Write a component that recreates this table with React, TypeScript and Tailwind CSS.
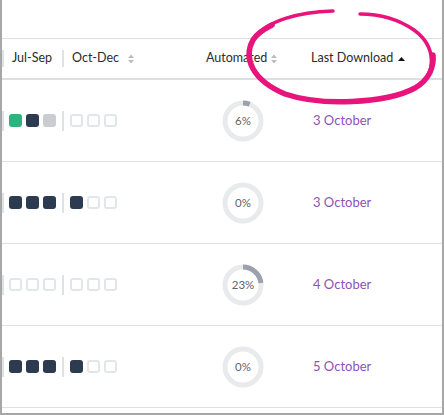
import React from 'react'

type Q = 'g' | 'n' | 'l' | 'e'

const rows: { a: Q[]; b: Q[]; pct: number; date: string }[] = [
  { a: ['g', 'n', 'l'], b: ['e', 'e', 'e'], pct: 6, date: '3 October' },
  { a: ['n', 'n', 'n'], b: ['n', 'e', 'e'], pct: 0, date: '3 October' },
  { a: ['e', 'e', 'e'], b: ['e', 'e', 'e'], pct: 23, date: '4 October' },
  { a: ['n', 'n', 'n'], b: ['n', 'e', 'e'], pct: 0, date: '5 October' },
]

function Sep({ h = 'h-[20px]' }: { h?: string }) {
  return <div className={`w-[2px] ${h} bg-[#dfe2e5]`} />
}

function Square({ q }: { q: Q }) {
  if (q === 'e') return <div className="h-[13px] w-[13px] rounded-[3px] border-2 border-[#e3e6e9]" />
  const bg = q === 'g' ? 'bg-[#2bb47d]' : q === 'n' ? 'bg-[#2c3b4f]' : 'bg-[#c9ccd0]'
  return <div className={`h-[13px] w-[13px] rounded-[3px] ${bg}`} />
}

function Squares({ list }: { list: Q[] }) {
  return (
    <div className="flex gap-[4px]">
      {list.map((q, i) => (
        <Square key={i} q={q} />
      ))}
    </div>
  )
}

function SortBoth() {
  return (
    <svg width="6" height="10" viewBox="0 0 6 10" className="fill-[#b9bdc3]">
      <polygon points="0,4 3,0.5 6,4" />
      <polygon points="0,6 3,9.5 6,6" />
    </svg>
  )
}

function Ring({ pct }: { pct: number }) {
  const r = 18
  const c = 2 * Math.PI * r
  return (
    <div className="relative h-[42px] w-[42px]">
      <svg width="42" height="42" viewBox="0 0 42 42" className="-rotate-90">
        <circle cx="21" cy="21" r={r} fill="none" stroke="#e9eaec" strokeWidth="5" />
        {pct > 0 && (
          <circle
            cx="21"
            cy="21"
            r={r}
            fill="none"
            stroke="#9ba2ab"
            strokeWidth="5"
            strokeDasharray={`${(c * pct) / 100} ${c}`}
          />
        )}
      </svg>
      <div className="absolute inset-0 flex items-center justify-center text-[11.5px] text-[#5f646b]">{pct}%</div>
    </div>
  )
}

export default function App() {
  return (
    <div
      className="relative h-[415px] w-[444px] overflow-hidden border-x-2 border-b-2 border-[#a7a7a7] bg-white text-[#2b2b2b]"
      style={{ fontFamily: 'Lato, "Noto Sans", sans-serif' }}
    >
      <div className="h-[38px]" />
      <div className="flex h-[42px] items-center border-y border-b-2 border-[#dcdfe3] text-[12.5px]">
        <div className="flex w-[60px] items-center">
          <Sep h="h-[17px]" />
          <span className="ml-[8px]">Jul-Sep</span>
        </div>
        <div className="flex w-[144px] items-center">
          <Sep h="h-[17px]" />
          <span className="ml-[8px]">Oct-Dec</span>
          <span className="ml-[9px] flex">
            <SortBoth />
          </span>
        </div>
        <div className="flex w-[105px] items-center">
          <span>Automated</span>
          <span className="ml-[4px] flex">
            <SortBoth />
          </span>
        </div>
        <div className="flex items-center">
          <span>Last Download</span>
          <svg width="7" height="4" viewBox="0 0 7 4" className="ml-[5px] fill-[#111]">
            <polygon points="0,4 3.5,0 7,4" />
          </svg>
        </div>
      </div>
      {rows.map((r, i) => (
        <div key={i} className="flex h-[82px] items-center border-b border-[#dedfe1]">
          <div className="flex w-[60px] items-center">
            <Sep />
            <div className="ml-[5px]">
              <Squares list={r.a} />
            </div>
          </div>
          <div className="flex w-[160px] items-center">
            <Sep />
            <div className="ml-[6px]">
              <Squares list={r.b} />
            </div>
          </div>
          <div className="w-[91px]">
            <Ring pct={r.pct} />
          </div>
          <div className="text-[13px] text-[#8e52b7]">{r.date}</div>
        </div>
      ))}
      <svg
        className="pointer-events-none absolute left-[-2px] top-0"
        width="444"
        height="415"
        viewBox="0 0 444 415"
      >
        <g fill="none" stroke="#e8147c" strokeLinecap="round">
          <path
            d="M 333 11 C 300 12, 266 20, 253 40 C 243 58, 252 80, 285 94 C 320 106, 385 104, 415 88 C 438 74, 436 46, 414 30 C 398 19, 378 14, 360 14"
            strokeWidth="3.5"
          />
          <path
            d="M 272 25 C 262 30, 256 35, 253 40 C 243 58, 252 80, 285 94 C 320 106, 385 104, 415 88 C 430 79, 434 66, 433 55"
            strokeWidth="5.5"
          />
        </g>
      </svg>
    </div>
  )
}
